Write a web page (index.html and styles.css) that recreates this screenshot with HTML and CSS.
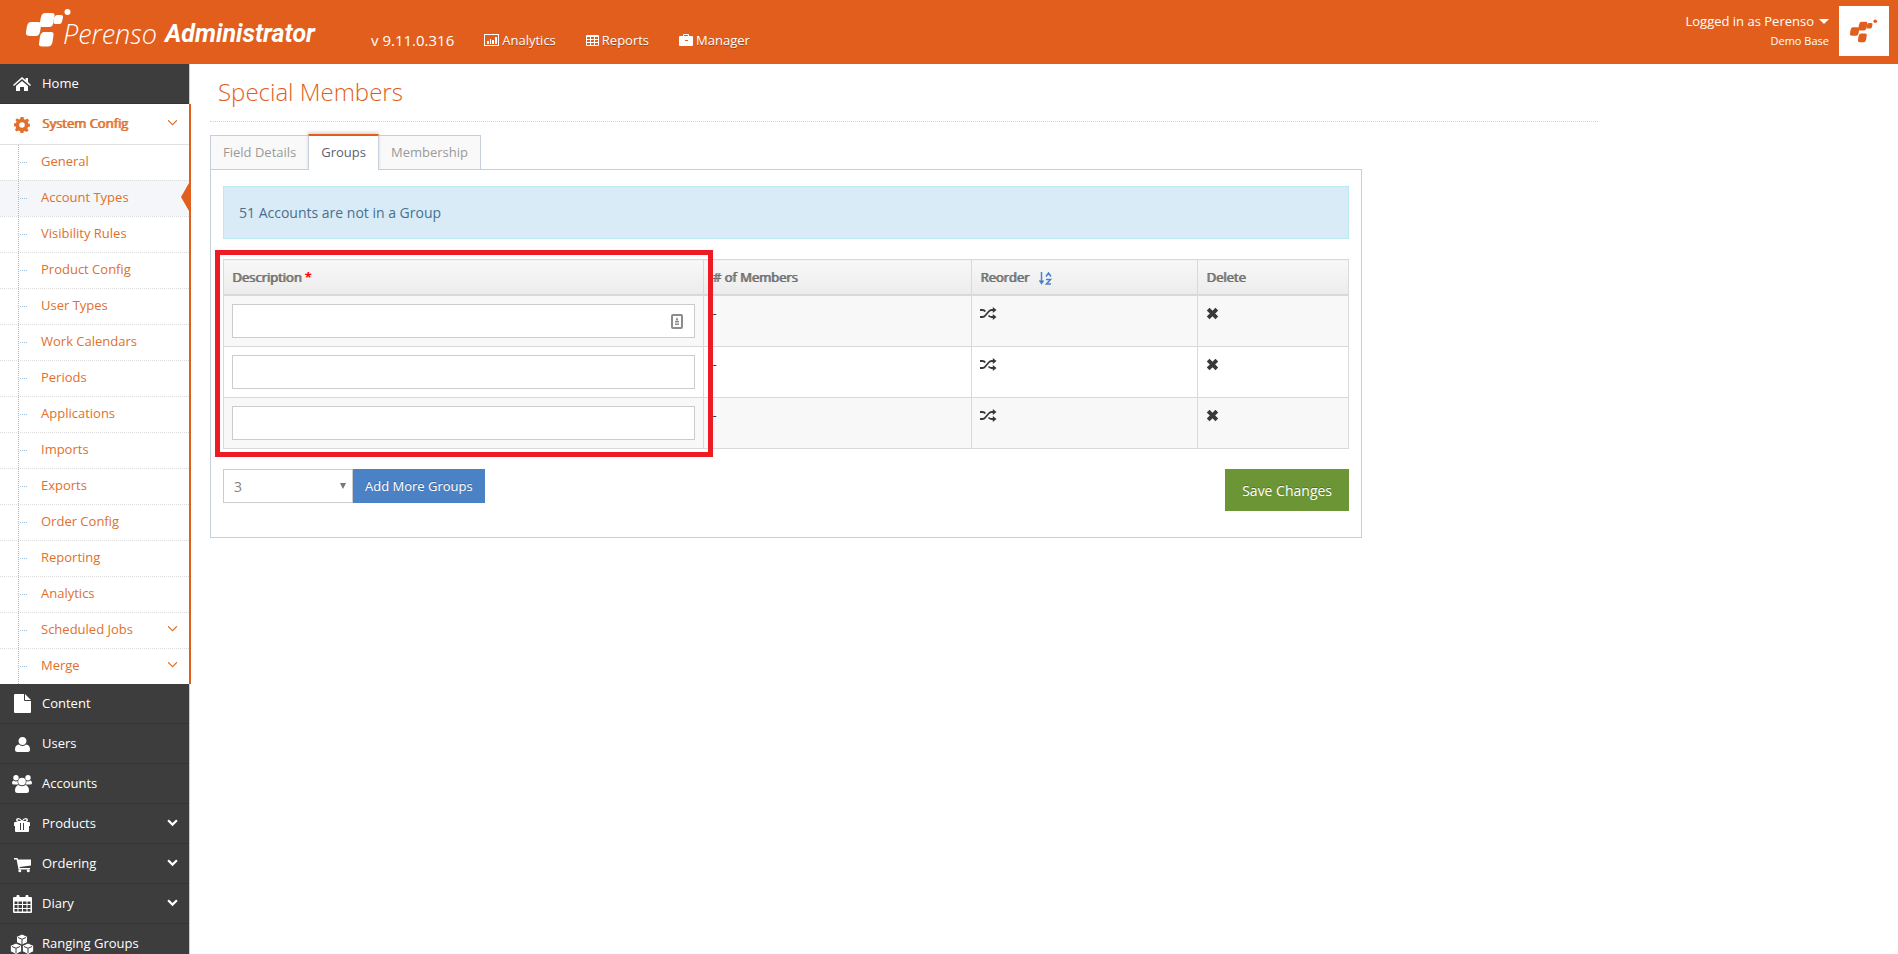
FILE: index.html
```html
<!DOCTYPE html>
<html lang="en">
<head>
    <meta charset="UTF-8">
    <meta name="viewport" content="width=device-width, initial-scale=1.0">
    <title>Perenso Administrator - Special Members</title>
    <link rel="stylesheet" href="styles.css">
</head>
<body>

    <!-- Shared icon shapes -->
    <svg class="sprite" aria-hidden="true">
        <symbol id="mark" viewBox="0 0 46 38">
            <path d="M19 4h7q3 0 2.500 3l-1.500 8q-.5 3-4 3h-7q-3 0-2.500-3l1.500-7q1-4 4-4z"/>
            <path d="M5 13h7q4 0 3 4l-1 6q-1 4-4 4H4q-5 0-4-4l1-6q1-4 4-4z"/>
            <path d="M18 23h7q3 0 2.500 3l-1 7q-1 4.500-4.500 4.500h-6q-3.500 0-3-3l1-7q1-4.500 4-4.500z"/>
            <path d="M31 6h4q2.500 0 2 2.500l-1 4q-.5 2.500-2.500 2.500h-4q-2.500 0-2-2.500l.7-4q.8-2.500 2.800-2.500z"/>
            <circle cx="41.500" cy="3" r="3"/>
        </symbol>
        <symbol id="chevron" viewBox="0 0 10 7">
            <path d="M1 1l4 4 4-4" fill="none" stroke="currentColor"/>
        </symbol>
        <symbol id="shuffle" viewBox="0 0 17 13">
            <path d="M0 10h2.500q1.700 0 2.800-1.500l3.400-4q1.300-1.500 3-1.500H13M0 3h2.500q1.700 0 2.800 1.500M8.500 8.500Q9.800 10 11.500 10H13" fill="none" stroke="currentColor" stroke-width="1.800"/>
            <path d="M12.800 0l3.700 3-3.700 3zM12.800 7l3.700 3-3.700 3z"/>
        </symbol>
        <symbol id="cross" viewBox="0 0 12 12">
            <path d="M2 2l8 8M10 2l-8 8" fill="none" stroke="currentColor" stroke-width="3.600"/>
        </symbol>
    </svg>

    <header class="navbar">
        <a class="brand" href="#">
            <svg class="brand-mark"><use href="#mark"/></svg>
            <span class="brand-name">Perenso</span>
            <span class="brand-product">Administrator</span>
        </a>
        <span class="version">v 9.11.0.316</span>
        <nav class="top-links">
            <a href="#">
                <svg width="15" height="12" viewBox="0 0 15 12"><path fill-rule="evenodd" d="M0 0h15v12H0zM1 1v10h13V1zM3 7h2v3H3zM6 5h1v5H6zM8 6h2v4H8zM11 3h2v7h-2z"/></svg>
                Analytics
            </a>
            <a href="#">
                <svg width="13" height="11" viewBox="0 0 13 11"><path fill-rule="evenodd" d="M1 0h11q1 0 1 1v9q0 1-1 1H1q-1 0-1-1V1q0-1 1-1zM1 2v2h3V2zM5 2v2h3V2zM9 2v2h3V2zM1 5v2h3V5zM5 5v2h3V5zM9 5v2h3V5zM1 8v2h3V8zM5 8v2h3V8zM9 8v2h3V8z"/></svg>
                Reports
            </a>
            <a href="#">
                <svg width="14" height="12" viewBox="0 0 14 12"><path fill-rule="evenodd" d="M4 2V1q0-1 1-1h4q1 0 1 1v1h3q1 0 1 1v8q0 1-1 1H1q-1 0-1-1V3q0-1 1-1zM5 1v1h4V1zM6 6v1h3V6z"/></svg>
                Manager
            </a>
        </nav>
        <a class="user" href="#">
            <span class="user-name">Logged in as Perenso <span class="caret"></span></span>
            <span class="user-base">Demo Base</span>
        </a>
        <div class="user-photo"><svg><use href="#mark"/></svg></div>
    </header>

    <div class="main">
        <aside class="sidebar">
            <ul class="nav-list">
                <li>
                    <a href="#">
                        <svg viewBox="-4 -3 26 20"><path d="M9 0L0 8l1 1 8-7 8 7 1-1-3-3V1h-2.500v2zM3 9l6-5 6 5v5h-4V10H7v4H3z"/></svg>
                        Home
                    </a>
                </li>
                <li class="open">
                    <a href="#">
                        <svg viewBox="-5 -2 26 20"><path fill-rule="evenodd" d="M6.500 0h3l.5 2.200 1.300.6L13.300 1.500l1.700 1.700-1.200 2 .5 1.300L16 7v2.500l-2 .5-.6 1.400 1.200 1.900-1.800 1.800-1.900-1.200-1.400.5L9.500 16h-3L6 14l-1.400-.6-1.900 1.200-1.800-1.800 1.200-1.900L1.600 9.500 0 9.300V6.600L2 6l.6-1.300L1.400 2.900l1.700-1.700L5 2.500l1.100-.4zM8 5.200a2.800 2.800 0 1 0 0 5.600 2.800 2.800 0 0 0 0-5.600z"/></svg>
                        <span class="strong">System Config</span>
                        <svg class="arrow"><use href="#chevron"/></svg>
                    </a>
                    <ul class="submenu">
                        <li><a href="#">General</a></li>
                        <li class="active"><a href="#">Account Types</a></li>
                        <li><a href="#">Visibility Rules</a></li>
                        <li><a href="#">Product Config</a></li>
                        <li><a href="#">User Types</a></li>
                        <li><a href="#">Work Calendars</a></li>
                        <li><a href="#">Periods</a></li>
                        <li><a href="#">Applications</a></li>
                        <li><a href="#">Imports</a></li>
                        <li><a href="#">Exports</a></li>
                        <li><a href="#">Order Config</a></li>
                        <li><a href="#">Reporting</a></li>
                        <li><a href="#">Analytics</a></li>
                        <li><a href="#">Scheduled Jobs <svg class="arrow"><use href="#chevron"/></svg></a></li>
                        <li><a href="#">Merge <svg class="arrow"><use href="#chevron"/></svg></a></li>
                    </ul>
                </li>
                <li>
                    <a href="#">
                        <svg viewBox="-5 0 26 20"><path d="M1 0h9v6q0 1 1 1h6v11q0 1-1 1H1q-1 0-1-1V1q0-1 1-1zM11 0l6 6h-6z"/></svg>
                        Content
                    </a>
                </li>
                <li>
                    <a href="#">
                        <svg viewBox="-6 -3 26 20"><path d="M7.500 0C10 0 11.500 2 11.500 4S10 8 7.500 8s-4-2-4-4 1.500-4 4-4zM4 7.500Q7.500 10.500 11 7.500 15 8 15 12.500q0 2.500-2.500 2.500h-10Q0 15 0 12.500 0 8 4 7.500z"/></svg>
                        Users
                    </a>
                </li>
                <li>
                    <a href="#">
                        <svg viewBox="-3 -1 26 20"><circle cx="4" cy="2.800" r="2.700"/><circle cx="16" cy="2.800" r="2.700"/><circle cx="10" cy="6.500" r="3.800"/><path d="M1.500 5.500Q4 7 5.500 6q0 2 1 3.500H2Q0 9.500 0 8q0-2 1.500-2.500zM18.500 5.500Q16 7 14.500 6q0 2-1 3.500H18q2 0 2-1.500 0-2-1.500-2.500zM6.500 10Q10 12.500 13.500 10q3.500 1 3.500 5.500 0 2.500-2.500 2.500h-9Q3 18 3 15.500 3 11 6.500 10z"/></svg>
                        Accounts
                    </a>
                </li>
                <li>
                    <a href="#">
                        <svg viewBox="-5 -4 26 20"><path fill-rule="evenodd" d="M5 4Q2 4 2 2t2.500-2Q6.500 0 8 2.500 9.500 0 11.500 0 14 0 14 2t-3 2h4q1 0 1 1v3h-1v5q0 1-1 1H2q-1 0-1-1V8H0V5q0-1 1-1zM4.500 1.300q-1 0-1 .8t1 .8H7q-1-1.600-2.500-1.600zm7 0Q10 1.300 9 2.900h2.500q1 0 1-.8t-1-.8zM6 5v7h1V5zM9 5v7h1V5z"/></svg>
                        Products
                        <svg class="arrow"><use href="#chevron"/></svg>
                    </a>
                </li>
                <li>
                    <a href="#">
                        <svg viewBox="-5 -4 26 20"><path d="M0 0h3.500l.5 1.500h13v6L5.500 9l.3 1H16v1.500H4.500L2.600 1.500H0z"/><circle cx="5.800" cy="12.700" r="1.500"/><circle cx="14.300" cy="12.700" r="1.500"/></svg>
                        Ordering
                        <svg class="arrow"><use href="#chevron"/></svg>
                    </a>
                </li>
                <li>
                    <a href="#">
                        <svg viewBox="-4 -1 26 20"><path fill-rule="evenodd" d="M1 2h2.500V1q0-1 1-1h1q1 0 1 1v1h6V1q0-1 1-1h1q1 0 1 1v1H18q1 0 1 1v14q0 1-1 1H1q-1 0-1-1V3q0-1 1-1zM1.500 6.500V9h3V6.500zM5.500 6.500V9h3.500V6.500zM10 6.500V9h3.500V6.500zM14.500 6.500V9h3V6.500zM1.500 10v3h3v-3zM5.500 10v3h3.500v-3zM10 10v3h3.500v-3zM14.500 10v3h3v-3zM1.500 14v2.500h3V14zM5.500 14v2.500h3.500V14zM10 14v2.500h3.500V14zM14.500 14v2.500h3V14z"/></svg>
                        Diary
                        <svg class="arrow"><use href="#chevron"/></svg>
                    </a>
                </li>
                <li>
                    <a href="#">
                        <svg viewBox="-1 0 26 20"><g stroke="#3d3d3d"><path d="M12 0l5.500 2.500v6L12 11 6.500 8.500v-6zM6 9l5.700 2.500v6L6 20.500.3 17.500v-6zM18 9l5.700 2.500v6L18 20.500l-5.700-3v-6z"/><path d="M8 3.500l4 1.800 4-1.800M12 5.500V10M2 12.500l4 1.800 4-1.800M6 14.500V19M14 12.500l4 1.800 4-1.800M18 14.500V19" fill="none"/></g></svg>
                        Ranging Groups
                    </a>
                </li>
            </ul>
        </aside>

        <main class="page">
            <h1>Special Members</h1>

            <div class="tabbable">
                <ul class="tabs">
                    <li><a href="#">Field Details</a></li>
                    <li class="active"><a href="#">Groups</a></li>
                    <li><a href="#">Membership</a></li>
                </ul>

                <form class="tab-content">
                    <div class="alert">51 Accounts are not in a Group</div>

                    <div class="groups">
                        <table>
                            <thead>
                                <tr>
                                    <th class="col-description"><span class="strong">Description</span> <span class="required">*</span></th>
                                    <th class="col-members"><span class="strong">#&nbsp;of Members</span></th>
                                    <th class="col-reorder">
                                        <span class="strong">Reorder</span>
                                        <svg class="sort" viewBox="0 0 13 13"><path d="M2.500 0v11M.5 8.500l2 3 2-3M7 4.500L9.500 1 12 4.500M7 7.500h4.500l-4 4.500H12" fill="none" stroke="currentColor" stroke-width="1.500"/></svg>
                                    </th>
                                    <th class="col-delete"><span class="strong">Delete</span></th>
                                </tr>
                            </thead>
                            <tbody>
                                <tr>
                                    <td>
                                        <div class="field">
                                            <input type="text" aria-label="Description 1">
                                            <svg class="autofill" viewBox="0 0 12 15"><rect x="1" y="1" width="10" height="13" rx="1" fill="#fff" stroke="#8c8c8c" stroke-width="2"/><path d="M6 3l1.500 3.500h-3zM4 7h4v1.500H4zM4 9.500h4V11H4z" fill="#8c8c8c"/></svg>
                                        </div>
                                    </td>
                                    <td>-</td>
                                    <td><button type="button" class="icon" aria-label="Reorder"><svg class="shuffle"><use href="#shuffle"/></svg></button></td>
                                    <td><button type="button" class="icon" aria-label="Delete"><svg class="cross"><use href="#cross"/></svg></button></td>
                                </tr>
                                <tr>
                                    <td><div class="field"><input type="text" aria-label="Description 2"></div></td>
                                    <td>-</td>
                                    <td><button type="button" class="icon" aria-label="Reorder"><svg class="shuffle"><use href="#shuffle"/></svg></button></td>
                                    <td><button type="button" class="icon" aria-label="Delete"><svg class="cross"><use href="#cross"/></svg></button></td>
                                </tr>
                                <tr>
                                    <td><div class="field"><input type="text" aria-label="Description 3"></div></td>
                                    <td>-</td>
                                    <td><button type="button" class="icon" aria-label="Reorder"><svg class="shuffle"><use href="#shuffle"/></svg></button></td>
                                    <td><button type="button" class="icon" aria-label="Delete"><svg class="cross"><use href="#cross"/></svg></button></td>
                                </tr>
                            </tbody>
                        </table>
                        <div class="highlight"></div>
                    </div>

                    <div class="actions">
                        <div class="select">
                            <select aria-label="Number of groups to add">
                                <option>1</option>
                                <option>2</option>
                                <option selected>3</option>
                            </select>
                        </div>
                        <button type="button" class="btn btn-add">Add More Groups</button>
                        <button type="submit" class="btn btn-save">Save Changes</button>
                    </div>
                </form>
            </div>
        </main>
    </div>

</body>
</html>
```

FILE: styles.css
```css
* {
    box-sizing: border-box;
}

body {
    margin: 0;
    height: 100vh;
    overflow: hidden;
    display: flex;
    flex-direction: column;
    font-family: "Open Sans", sans-serif;
    font-size: 13px;
    line-height: 20px;
    color: #393939;
    background: #fff;
}

ul {
    list-style: none;
    margin: 0;
    padding: 0;
}

a {
    color: inherit;
    text-decoration: none;
}

svg {
    fill: currentColor;
    flex: none;
}

.sprite {
    position: absolute;
    width: 0;
    height: 0;
}

/* Open Sans regular thickened to the right, same width as normal text */
.strong {
    font-weight: 400;
    text-shadow: 1px 0 currentColor;
}

/* Top bar */
.navbar {
    flex: none;
    height: 64px;
    display: flex;
    align-items: center;
    padding: 0 9px 0 26px;
    background: #e15e1d;
    color: #fff;
}

.brand {
    display: flex;
    align-items: center;
    height: 64px;
    padding-bottom: 8px;
}

.brand-mark {
    width: 46px;
    height: 38px;
}

.brand-name {
    font-size: 27px;
    font-style: italic;
    font-weight: 300;
    padding-top: 12px;
    margin-left: -9px;
}

.brand-product {
    font-family: Roboto, "Liberation Sans", sans-serif;
    font-size: 25px;
    font-style: italic;
    font-weight: 700;
    padding-top: 12px;
    margin-left: 8px;
}

.version {
    font-size: 15px;
    margin: 16px 0 0 56px;
}

.top-links {
    display: flex;
    gap: 30px;
    margin: 16px 0 0 30px;
    text-shadow: 0 1px 0 rgba(0, 0, 0, 0.3);
}

.top-links a {
    display: flex;
    align-items: center;
    gap: 3px;
}

.user {
    margin-left: auto;
    text-align: right;
    display: flex;
    flex-direction: column;
    padding-bottom: 2px;
}

.user-name {
    display: flex;
    align-items: center;
    gap: 5px;
}

.user-base {
    font-size: 11px;
}

.caret {
    border: 5px solid transparent;
    border-top-color: #fff;
    border-bottom: 0;
}

.user-photo {
    width: 50px;
    height: 50px;
    margin: 0 0 2px 10px;
    display: flex;
    align-items: center;
    justify-content: center;
    background: #fff;
    color: #e15e1d;
}

.user-photo svg {
    width: 28px;
    height: 24px;
}

/* Left menu */
.main {
    flex: 1;
    min-height: 0;
    display: flex;
}

.sidebar {
    flex: none;
    width: 190px;
    background: #3d3d3d;
    border-right: 1px solid #ccc;
}

.nav-list > li {
    border-bottom: 1px solid #353535;
}

.nav-list > li > a {
    display: flex;
    align-items: center;
    gap: 12px;
    height: 39px;
    padding: 0 11px 2px 9px;
    color: #fff;
}

.nav-list > li > a > svg:first-child {
    width: 26px;
    height: 20px;
    margin: 3px -5px 0 0;
}

.arrow {
    width: 11px;
    height: 8px;
    margin-left: auto;
    stroke-width: 2px;
}

.nav-list > li.open {
    margin-right: -2px;
    border-right: 2px solid #e15e1d;
    border-bottom: 0;
    background: #fff;
    position: relative;
}

.nav-list > li.open > a {
    height: 40px;
    color: #e0702c;
}

.open .arrow {
    stroke-width: 1px;
}

.submenu {
    border-top: 1px solid #e0e0e0;
}

.submenu li {
    position: relative;
    border-top: 1px dotted #ddd;
}

.submenu li:first-child {
    border-top: 0;
}

.submenu li a {
    display: flex;
    align-items: center;
    height: 35px;
    padding: 0 11px 3px 41px;
    color: #e0702c;
}

/* tree lines */
.submenu li::before {
    content: "";
    position: absolute;
    top: 0;
    bottom: 0;
    left: 18px;
    border-left: 1px dotted #9dbdd6;
}

.submenu li::after {
    content: "";
    position: absolute;
    top: 17px;
    left: 20px;
    width: 7px;
    border-top: 1px dotted #9dbdd6;
}

.submenu .active {
    background: #f4f6fa;
}

.submenu .active a::after {
    content: "";
    position: absolute;
    top: 2px;
    right: 0;
    border: 14px solid transparent;
    border-right: 8px solid #e15e1d;
    border-left: 0;
}

/* Page */
.page {
    flex: 1;
    padding: 11px 300px 24px 20px;
}

h1 {
    margin: 0 0 12px;
    padding: 0 8px 12px;
    border-bottom: 1px dotted #d5d5d5;
    font-size: 24px;
    font-weight: 300;
    line-height: 34px;
    color: #e15e1d;
}

.tabbable {
    width: 83%;
}

.tabs {
    display: flex;
    align-items: flex-end;
}

.tabs li a {
    display: block;
    height: 34px;
    padding: 6px 12px;
    border: 1px solid #c5d0dc;
    border-bottom: 0;
    margin-right: -1px;
    background: #f9f9f9;
    color: #999;
}

.tabs .active {
    position: relative;
    margin-bottom: -1px;
}

.tabs .active a {
    height: 36px;
    border-top: 2px solid #e15e1d;
    background: #fff;
    color: #576373;
    box-shadow: 0 -2px 3px rgba(0, 0, 0, 0.15);
}

.tab-content {
    padding: 16px 12px 26px;
    border: 1px solid #c5d0dc;
}

.alert {
    padding: 15px;
    margin-bottom: 20px;
    border: 1px solid #bce8f1;
    background: #d9ebf7;
    color: #47708f;
    font-size: 14px;
    line-height: 21px;
}

/* Groups table */
.groups {
    position: relative;
    margin-bottom: 20px;
}

table {
    width: 100%;
    table-layout: fixed;
    border-collapse: collapse;
}

th,
td {
    padding: 8px;
    border: 1px solid #d9d9d9;
    text-align: left;
    vertical-align: top;
    line-height: 18px;
}

th {
    height: 35px;
    border-bottom-width: 2px;
    color: #707070;
    font-weight: 400;
    background: linear-gradient(#f8f8f8, #ececec);
}

tbody tr:nth-child(odd) {
    background: #f8f8f8;
}

.col-description {
    width: 42.7%;
}

.col-members {
    width: 23.8%;
}

.col-reorder {
    width: 20.1%;
}

.required {
    color: #f00;
    font-weight: 700;
}

.sort {
    width: 13px;
    height: 13px;
    margin-left: 6px;
    vertical-align: -3px;
    color: #4b82c6;
}

th .sort {
    margin-top: -2px;
}

.field {
    position: relative;
}

.field input {
    display: block;
    width: 100%;
    height: 34px;
    padding: 5px 8px;
    border: 1px solid #ccc;
    font: inherit;
}

.autofill {
    position: absolute;
    top: 10px;
    right: 12px;
    width: 12px;
    height: 15px;
}

.icon {
    display: block;
    padding: 0;
    border: 0;
    background: none;
    color: #393939;
    line-height: 18px;
    cursor: pointer;
}

.icon svg {
    display: block;
    margin-top: 3px;
}

.shuffle {
    width: 17px;
    height: 13px;
}

.cross {
    width: 13px;
    height: 13px;
}

/* Marks the column to fill in */
.highlight {
    position: absolute;
    top: -9px;
    bottom: -8px;
    left: -8px;
    width: calc(42.7% + 17px);
    border: 5px solid #ed1c24;
    pointer-events: none;
}

/* Buttons under the table */
.actions {
    display: flex;
    align-items: flex-start;
}

.select {
    position: relative;
}

.select select {
    display: block;
    width: 130px;
    height: 34px;
    padding: 0 10px;
    border: 1px solid #ccc;
    border-radius: 0;
    background: #fff;
    color: #858585;
    font-family: inherit;
    font-size: 14px;
    appearance: none;
}

.select::after {
    content: "";
    position: absolute;
    top: 14px;
    right: 7px;
    border: 3px solid transparent;
    border-top: 6px solid #777;
    border-bottom: 0;
    pointer-events: none;
}

.btn {
    border: 0;
    color: #fff;
    font-family: inherit;
    text-shadow: 0 -1px 0 rgba(0, 0, 0, 0.25);
    cursor: pointer;
}

.btn-add {
    height: 34px;
    padding: 0 12px;
    background: #4b82c6;
    font-size: 13px;
}

.btn-save {
    height: 42px;
    margin-left: auto;
    padding: 0 17px;
    background: #6c9535;
    font-size: 14px;
}
```
